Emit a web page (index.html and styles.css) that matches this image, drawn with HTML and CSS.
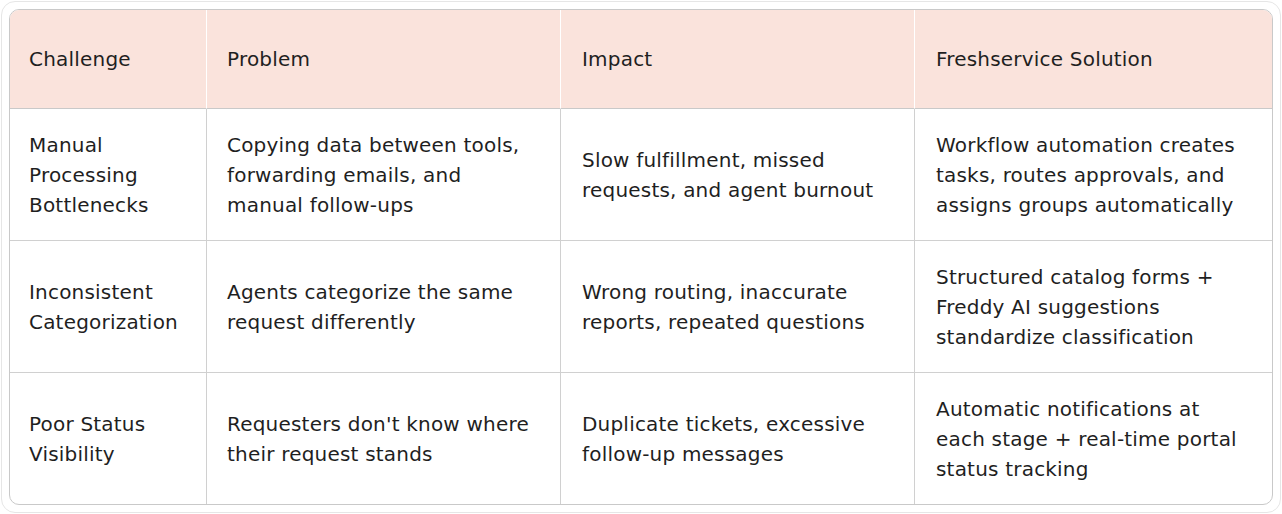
FILE: index.html
```html
<!DOCTYPE html>
<html lang="en">
<head>
<meta charset="utf-8">
<title>Challenges</title>
<link rel="stylesheet" href="styles.css">
</head>
<body>
<div class="frame">
  <div class="table">
    <div class="cell head first">Challenge</div>
    <div class="cell head">Problem</div>
    <div class="cell head wide">Impact</div>
    <div class="cell head wide">Freshservice Solution</div>

    <div class="cell first">Manual Processing Bottlenecks</div>
    <div class="cell">Copying data between tools, forwarding emails, and manual follow-ups</div>
    <div class="cell wide">Slow fulfillment, missed requests, and agent burnout</div>
    <div class="cell wide">Workflow automation creates tasks, routes approvals, and assigns groups automatically</div>

    <div class="cell first">Inconsistent Categorization</div>
    <div class="cell">Agents categorize the same request differently</div>
    <div class="cell wide">Wrong routing, inaccurate reports, repeated questions</div>
    <div class="cell wide">Structured catalog forms + Freddy AI suggestions standardize classification</div>

    <div class="cell first last">Poor Status Visibility</div>
    <div class="cell last">Requesters don't know where their request stands</div>
    <div class="cell wide last">Duplicate tickets, excessive follow-up messages</div>
    <div class="cell wide last">Automatic notifications at each stage + real-time portal status tracking</div>
  </div>
</div>
</body>
</html>
```

FILE: styles.css
```css
* { box-sizing: border-box; }
html, body { margin: 0; padding: 0; background: #ffffff; }
body {
  width: 1282px;
  height: 514px;
  padding: 1px;
  font-family: "DejaVu Sans", "Liberation Sans", sans-serif;
  color: #1f1f1f;
}
.frame {
  width: 1280px;
  height: 512px;
  border: 1px solid #e6e6e6;
  border-radius: 14px;
  padding: 7px;
}
.table {
  width: 1264px;
  display: grid;
  grid-template-columns: 196px 354px 354px 358px;
  grid-template-rows: 99px 132px 132px 131px;
  border: 1px solid #c9c9c9;
  border-radius: 10px;
  overflow: hidden;
  background: #ffffff;
}
.cell {
  display: flex;
  align-items: center;
  padding: 0 18px 0 20px;
  border-left: 1px solid #d0d0d0;
  border-bottom: 1px solid #d0d0d0;
  font-size: 20px;
  line-height: 30px;
  letter-spacing: 0.2px;
}
.cell.wide { padding-left: 21px; padding-right: 17px; }
.cell.first { border-left: none; padding-left: 19px; }
.cell.last { border-bottom: none; }
.cell.head {
  background: #fae3dc;
  border-left-color: #ffffff;
  border-bottom-color: #c9c9c9;
}
.cell.head.first { border-left: none; }
```
